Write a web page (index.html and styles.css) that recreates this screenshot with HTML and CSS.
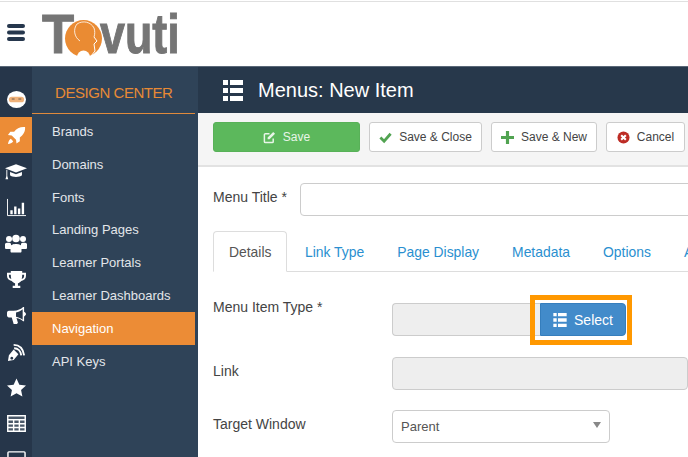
FILE: index.html
```html
<!DOCTYPE html>
<html lang="en">
<head>
<meta charset="utf-8">
<title>Menus: New Item</title>
<link rel="stylesheet" href="styles.css">
</head>
<body>
<header class="topbar">
  <svg class="burger" viewBox="0 0 18 17"><rect y="0" width="18" height="4" rx="2"/><rect y="6.5" width="18" height="4" rx="2"/><rect y="13" width="18" height="4" rx="2"/></svg>
  <svg class="logo" viewBox="0 -10 146 64">
    <text class="logo-t" transform="translate(0 41) scale(.94 1)">T</text>
    <circle cx="41.500" cy="26.500" r="18.500" fill="#ea8b33"/>
    <path d="M35 45.500a6.500 7 0 0 1 13 0z" fill="#fff"/>
    <path d="M35 12c-4 5-3 13 3 17M35 12c6-4 14-2 17 4 1 3 1 6 0 9" fill="none" stroke="#fff" stroke-width=".8"/>
    <path d="M52 25l3 4-3 3 1 7-4 5" fill="none" stroke="#fff" stroke-width="1"/>
    <text class="logo-t" transform="translate(58 41) scale(.8 1)">vuti</text>
  </svg>
</header>
<div class="app">
  <nav class="rail">
    <a class="rail-item"><svg class="ico" viewBox="0 0 20 20"><ellipse cx="10" cy="10" rx="10" ry="9" fill="#fff"/><rect x="2" y="7" width="16" height="6" rx="3" fill="#f0b27a"/><path d="M5 9.500h3M12 9.500h3" stroke="#6b5a4a"/></svg></a>
    <a class="rail-item active"><svg class="ico" viewBox="0 0 20 20"><path fill="#fff" d="M19 1c-5-.5-9 1.500-11.500 5H3.500L1 9.500l4 .5 4.500 4.500.5 4 3.500-2.500v-4C17 9.500 19.500 6 19 1zM4 13.500c-2 1-2.500 3.500-3 5.500 2-.5 4.500-1 5.500-3z"/></svg></a>
    <a class="rail-item"><svg class="ico wide" viewBox="0 0 24 18"><path fill="#fff" d="M12 1 24 5.500 12 10 0 5.500zM5.500 9.500 12 12l6.500-2.500V13c-2 2.500-11 2.500-13 0zM1.500 7h1v7l1 3.500h-3l1-3.500z"/></svg></a>
    <a class="rail-item"><svg class="ico" viewBox="0 0 20 20"><path fill="none" stroke="#fff" d="M.5 1v17.500H20"/><path fill="#fff" d="M3.500 13h2.500v4H3.500zM7.500 9h2.500v8H7.500zM11.500 11h2.500v6h-2.500zM15.500 5H18v12h-2.500z"/></svg></a>
    <a class="rail-item"><svg class="ico wide" viewBox="0 0 22 18"><g fill="#fff"><circle cx="4" cy="4.500" r="3"/><circle cx="18" cy="4.500" r="3"/><circle cx="11" cy="4" r="3.800"/><path d="M0 9.500c0-1.500 6-2 6 0v5H1c-1 0-1-1-1-1zM16 9.500c0-2 6-1.500 6 0v4s0 1-1 1h-5zM5.500 12c0-3.500 11-3.500 11 0v5c0 1-1 1-1 1h-9s-1 0-1-1z"/></g></svg></a>
    <a class="rail-item"><svg class="ico" viewBox="0 0 20 20"><path fill="#fff" d="M4 1h12v2h4v3c0 3-2 5-5 5.500-1 1-2 2-3.500 2.500v2.500H14V19H6v-2.500h2.500V14C7 13.500 6 12.500 5 11.500 2 11 0 9 0 6V3h4zM2 5v1c0 2 1 3 2.500 3.500C4.200 8 4 6.500 4 5zm14 0c0 1.500-.2 3-.5 4.500C17 9 18 8 18 6V5z"/></svg></a>
    <a class="rail-item"><svg class="ico" viewBox="0 0 20 20"><path fill="#fff" d="M0 7c0-1 1-2 2-2h5c4 0 8-2 10-4h1v5c1 .5 2 1.500 2 2.500S19 10.500 18 11v5h-1c-1.500-1.500-4-3-7-3.500l1.500 5-1 1.500H7l-2-7H2c-1 0-2-1-2-2zM16.500 3.500C15 5 12 6.300 9.500 6.800v4.400c2.500.5 5.500 1.800 7 3.300z"/></svg></a>
    <a class="rail-item"><svg class="ico" viewBox="0 0 20 20"><path fill="#fff" d="M1 20l1-6 5-6 5 5-5 6zM5 15.500a1.500 1.500 0 1 0 .1 0z"/><path fill="none" stroke="#fff" stroke-width="2" d="M7 3c6 0 10 4 11 11M7.500 6.500c4 0 7 3 7.500 7.500"/></svg></a>
    <a class="rail-item"><svg class="ico" viewBox="0 0 20 20"><path fill="#fff" d="M10 .5l3 6.500 7 .8-5.200 4.700 1.400 7L10 16l-6.200 3.500 1.400-7L0 7.800 7 7z"/></svg></a>
    <a class="rail-item"><svg class="ico" viewBox="0 0 20 18"><path fill="#4a5868" d="M1 1h18v16H1z"/><path fill="none" stroke="#fff" stroke-width="1.500" d="M.8.800h18.400v16.400H.8zM.8 5h18.400M.8 9.300h18.400M.8 13.300h18.400M7 5v12.200M13 5v12.200"/></svg></a>
    <a class="rail-item"><svg class="ico" viewBox="0 0 20 18"><rect x="1" y="1" width="18" height="13" rx="1" fill="none" stroke="#fff" stroke-width="1.500"/></svg></a>
  </nav>
  <aside class="panel">
    <h2 class="panel-title">DESIGN CENTER</h2>
    <ul class="panel-menu">
      <li>Brands</li>
      <li>Domains</li>
      <li>Fonts</li>
      <li>Landing Pages</li>
      <li>Learner Portals</li>
      <li>Learner Dashboards</li>
      <li class="current">Navigation</li>
      <li>API Keys</li>
    </ul>
  </aside>
  <main class="main">
    <div class="titlebar">
      <svg class="title-ico" viewBox="0 0 20 21"><path fill="#fff" d="M0 0h5v5H0zM7 0h13v5H7zM0 8h5v5H0zM7 8h13v5H7zM0 16h5v5H0zM7 16h13v5H7z"/></svg>
      <h1>Menus: New Item</h1>
    </div>
    <div class="toolbar">
      <button class="btn btn-save"><svg class="btn-ico" viewBox="0 0 14 14"><path fill="none" stroke="#e8f5e8" stroke-width="1.600" d="M11 8v3.500a1 1 0 0 1-1 1H2.500a1 1 0 0 1-1-1V4a1 1 0 0 1 1-1H7"/><path fill="#e8f5e8" d="M5 7 11 1l2 2-6 6H5z"/></svg>Save</button>
      <button class="btn btn-close"><svg class="btn-ico" viewBox="0 0 14 14"><path fill="none" stroke="#51a351" stroke-width="3" d="M1.500 7l4 4 7-8"/></svg>Save &amp; Close</button>
      <button class="btn btn-new"><svg class="btn-ico" viewBox="0 0 14 14"><path fill="#51a351" d="M5.300 0h3.400v5.300H14v3.400H8.700V14H5.300V8.700H0V5.300h5.300z"/></svg>Save &amp; New</button>
      <button class="btn btn-cancel"><svg class="btn-ico" viewBox="0 0 14 14"><circle cx="7" cy="7" r="6.500" fill="#bd2c25"/><path stroke="#fff" stroke-width="2.200" d="M4.500 4.500l5 5M9.500 4.500l-5 5"/></svg>Cancel</button>
    </div>
    <form class="form">
      <div class="title-row">
        <label class="title-label">Menu Title *</label>
        <div class="field title-field"></div>
      </div>
      <ul class="tabs">
        <li class="tab selected">Details</li>
        <li class="tab">Link Type</li>
        <li class="tab">Page Display</li>
        <li class="tab">Metadata</li>
        <li class="tab">Options</li>
        <li class="tab">Advanced</li>
      </ul>
      <div class="row type-row">
        <label class="label">Menu Item Type *</label>
        <div class="group">
          <div class="field readonly type-field"></div>
          <button type="button" class="select-btn"><svg class="select-ico" viewBox="0 0 20 21"><path fill="#fff" d="M0 0h5v5H0zM7 0h13v5H7zM0 8h5v5H0zM7 8h13v5H7zM0 16h5v5H0zM7 16h13v5H7z"/></svg>Select</button>
          <div class="callout"></div>
        </div>
      </div>
      <div class="row link-row">
        <label class="label">Link</label>
        <div class="field readonly link-field"></div>
      </div>
      <div class="row target-row">
        <label class="label">Target Window</label>
        <div class="field select-field">Parent<span class="caret"></span></div>
      </div>
    </form>
  </main>
</div>
</body>
</html>
```
FILE: styles.css
```css
* { box-sizing: border-box; }
html, body { margin: 0; height: 100%; overflow: hidden; background: #fff; }
body { font-family: "Liberation Sans", Arial, sans-serif; display: flex; flex-direction: column; color: #444; }

.topbar { height: 66px; margin-top: 1px; flex: none; border-top: 1px solid #e0e0e0; display: flex; align-items: flex-start; background: #fff; border-bottom: 1px solid #5a6878; }
.burger { width: 18px; height: 17px; margin: 22px 0 0 7px; fill: #26374d; }
.logo { width: 146px; height: 64px; margin: 0 0 0 17px; }
.logo-t { font-family: "Liberation Sans", Arial, sans-serif; font-weight: 700; font-size: 56px; fill: #757575; stroke: #757575; stroke-width: 1px; }

.app { flex: 1; display: flex; min-height: 0; }
.rail { width: 32px; flex: none; background: #26364a; padding-top: 14px; display: flex; flex-direction: column; overflow: hidden; }
.rail-item { height: 36.100px; flex: none; display: flex; align-items: center; justify-content: center; }
.rail-item.active { background: #ec8c36; }
.ico { width: 19px; height: 19px; }
.ico.wide { width: 22px; height: 19px; }

.panel { width: 166px; flex: none; background: #2f4358; padding-right: 3px; }
.panel-title { margin: 0; height: 47px; border-bottom: 1px solid #e08a3c; font-weight: 400; font-size: 15px; letter-spacing: -.45px; color: #e88a35; line-height: 52px; padding-left: 23px; }
.panel-menu { list-style: none; margin: 1px 0 0; padding: 0; }
.panel-menu li { height: 32.800px; line-height: 33px; padding-left: 20px; font-size: 13px; color: #e3e6ea; }
.panel-menu li.current { background: #ec8c36; color: #fff; }

.main { flex: 1; min-width: 0; overflow: hidden; display: flex; flex-direction: column; }
.titlebar { height: 46px; flex: none; background: #27384b; display: flex; align-items: center; padding-left: 25px; }
.title-ico { width: 20px; height: 21px; margin-right: 15px; }
.titlebar h1 { margin: 0; font-weight: 400; font-size: 20px; color: #fff; }

.toolbar { height: 54px; flex: none; background: #f5f5f5; border-bottom: 2px solid #e2e2e2; display: flex; gap: 9px; padding: 9px 0 0 15px; }
.btn { height: 30px; border: 1px solid #ccc; border-radius: 3px; background: #fff; font: 12px "Liberation Sans", Arial, sans-serif; color: #444; display: flex; align-items: center; justify-content: center; padding: 0; flex: none; }
.btn-save { width: 147px; background: #5cb85c; border-color: #58b158; color: #e8f5e8; }
.btn-close { width: 113px; }
.btn-new { width: 106px; }
.btn-cancel { width: 79px; }
.btn-ico { width: 13px; height: 13px; margin-right: 7px; }

.form { padding: 16px 0 0 15px; font-size: 14px; }
.title-row { display: flex; align-items: center; height: 33px; }
.title-label { width: 87px; flex: none; padding-bottom: 5px; }
.field { border: 1px solid #ccc; border-radius: 4px; background: #fff; }
.title-field { flex: none; width: 420px; height: 33px; }

.tabs { list-style: none; margin: 15px 0 0; padding: 0; display: flex; height: 41px; width: 500px; border-bottom: 1px solid #ddd; }
.tab { flex: none; height: 40px; padding: 0 15px; margin-right: 1px; line-height: 40px; color: #2a8fd0; font-size: 13.900px; white-space: nowrap; border: 1px solid transparent; }
.tab.selected { height: 41px; width: 74px; margin-right: 2px; color: #555; background: #fff; border-color: #ddd #ddd #fff; border-radius: 4px 4px 0 0; }

.row { display: flex; align-items: flex-start; }
.label { width: 179px; flex: none; }
.type-row { margin-top: 31px; }
.type-row .label { margin-top: -4px; }
.group { position: relative; display: flex; height: 33px; width: 234px; }
.readonly { background: #eee; }
.type-field { width: 148px; border-radius: 4px 0 0 4px; border-right: 0; }
.select-btn { width: 86px; height: 33px; padding: 0; border: 1px solid #357ebd; border-radius: 0 4px 4px 0; background: #428bca; color: #fff; font: 14px "Liberation Sans", Arial, sans-serif; display: flex; align-items: center; justify-content: center; }
.select-ico { width: 14px; height: 14px; margin-right: 7px; }
.callout { position: absolute; left: 138px; top: -8px; width: 102px; height: 50px; border: 5px solid #ff9800; pointer-events: none; }
.link-row { margin-top: 21px; align-items: center; }
.link-row .label { padding-bottom: 6px; }
.link-field { width: 400px; height: 33px; }
.target-row { margin-top: 20px; align-items: center; }
.target-row .label { padding-bottom: 5px; }
.select-field { position: relative; width: 218px; height: 33px; line-height: 31px; padding-left: 8px; font-size: 13px; color: #555; }
.caret { position: absolute; right: 8px; top: 11px; border: 4px solid transparent; border-top: 6px solid #888; border-bottom: 0; }
```
